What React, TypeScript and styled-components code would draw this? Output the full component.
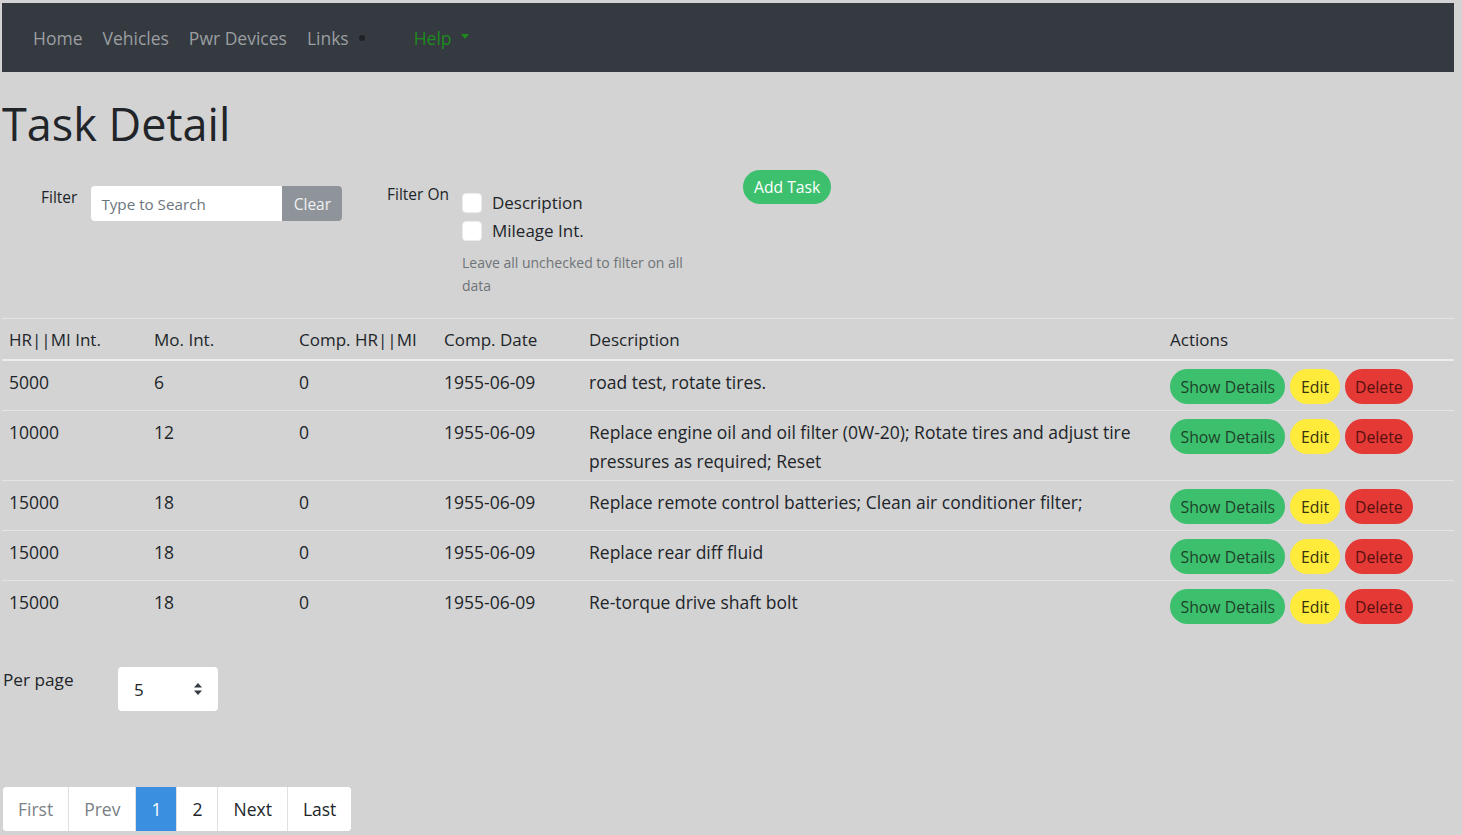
import React from "react";
import styled, { createGlobalStyle } from "styled-components";

const GlobalStyle = createGlobalStyle`
  html, body {
    margin: 0;
    padding: 0;
    background: #d3d3d3;
  }
  body {
    font-family: "Open Sans", "Noto Sans", sans-serif;
    color: #212529;
  }
  * { box-sizing: border-box; }
`;

interface TaskRow {
  interval: number;
  months: number;
  compHr: number;
  compDate: string;
  description: string;
}

const tasks: TaskRow[] = [
  { interval: 5000, months: 6, compHr: 0, compDate: "1955-06-09", description: "road test, rotate tires." },
  {
    interval: 10000,
    months: 12,
    compHr: 0,
    compDate: "1955-06-09",
    description:
      "Replace engine oil and oil filter (0W-20); Rotate tires and adjust tire pressures as required; Reset",
  },
  {
    interval: 15000,
    months: 18,
    compHr: 0,
    compDate: "1955-06-09",
    description: "Replace remote control batteries; Clean air conditioner filter;",
  },
  { interval: 15000, months: 18, compHr: 0, compDate: "1955-06-09", description: "Replace rear diff fluid" },
  { interval: 15000, months: 18, compHr: 0, compDate: "1955-06-09", description: "Re-torque drive shaft bolt" },
];

const pages = [
  { label: "First", state: "disabled" },
  { label: "Prev", state: "disabled" },
  { label: "1", state: "active" },
  { label: "2", state: "normal" },
  { label: "Next", state: "normal" },
  { label: "Last", state: "normal" },
] as const;

export default function App() {
  return (
    <>
      <GlobalStyle />
      <Page>
        <NavBar>
          <NavLink>Home</NavLink>
          <NavLink>Vehicles</NavLink>
          <NavLink>Pwr Devices</NavLink>
          <NavLink>
            Links <Dot />
          </NavLink>
          <HelpLink>
            Help <Caret />
          </HelpLink>
        </NavBar>

        <Title>Task Detail</Title>

        <FilterArea>
          <FilterGroup>
            <FieldLabel>Filter</FieldLabel>
            <InputGroup>
              <SearchInput placeholder="Type to Search" />
              <ClearButton>Clear</ClearButton>
            </InputGroup>
          </FilterGroup>

          <FilterOnGroup>
            <FieldLabel>Filter On</FieldLabel>
            <CheckList>
              <CheckRow>
                <CheckBox />
                Description
              </CheckRow>
              <CheckRow>
                <CheckBox />
                Mileage Int.
              </CheckRow>
              <HelpText>Leave all unchecked to filter on all data</HelpText>
            </CheckList>
          </FilterOnGroup>

          <AddButton>Add Task</AddButton>
        </FilterArea>

        <Table>
          <colgroup>
            <col style={{ width: 145 }} />
            <col style={{ width: 145 }} />
            <col style={{ width: 145 }} />
            <col style={{ width: 145 }} />
            <col style={{ width: 581 }} />
            <col />
          </colgroup>
          <thead>
            <tr>
              <Th>HR||MI Int.</Th>
              <Th>Mo. Int.</Th>
              <Th>Comp. HR||MI</Th>
              <Th>Comp. Date</Th>
              <Th>Description</Th>
              <Th>Actions</Th>
            </tr>
          </thead>
          <tbody>
            {tasks.map((t, i) => (
              <tr key={i}>
                <Td>{t.interval}</Td>
                <Td>{t.months}</Td>
                <Td>{t.compHr}</Td>
                <Td>{t.compDate}</Td>
                <Td>{t.description}</Td>
                <Td>
                  <Actions>
                    <PillButton $variant="green">Show Details</PillButton>
                    <PillButton $variant="yellow">Edit</PillButton>
                    <PillButton $variant="red">Delete</PillButton>
                  </Actions>
                </Td>
              </tr>
            ))}
          </tbody>
        </Table>

        <PerPageRow>
          <PerPageLabel>Per page</PerPageLabel>
          <SelectBox>
            5
            <svg width="10" height="14" viewBox="0 0 10 14">
              <path d="M5 1 L9 5.5 H1 Z" fill="#343a40" />
              <path d="M5 13 L9 8.5 H1 Z" fill="#343a40" />
            </svg>
          </SelectBox>
        </PerPageRow>

        <Pagination>
          {pages.map((p) => (
            <PageItem key={p.label} $state={p.state}>
              {p.label}
            </PageItem>
          ))}
        </Pagination>
      </Page>
    </>
  );
}

/* Styled Components */
const Page = styled.div`
  padding: 3px 8px 4px 2px;
`;

const NavBar = styled.nav`
  height: 69px;
  background: #343a40;
  display: flex;
  align-items: center;
  padding-left: 21px;
`;

const NavLink = styled.a`
  display: flex;
  align-items: center;
  padding: 0 10px;
  font-size: 17.5px;
  color: #9b9ea2;
  cursor: pointer;
`;

const Dot = styled.span`
  display: inline-block;
  width: 6px;
  height: 6px;
  border-radius: 50%;
  background: #1f2326;
  margin-left: 10px;
`;

const HelpLink = styled(NavLink)`
  color: #1d8a1d;
  margin-left: 29px;
`;

const Caret = styled.span`
  display: inline-block;
  margin-left: 9px;
  margin-top: -2px;
  border-top: 5px solid #1d8a1d;
  border-left: 4.5px solid transparent;
  border-right: 4.5px solid transparent;
`;

const Title = styled.h1`
  font-size: 45px;
  font-weight: 400;
  margin: 26px 0 20px;
  line-height: 52px;
`;

const FilterArea = styled.div`
  display: flex;
  align-items: flex-start;
  height: 148px;
`;

const FilterGroup = styled.div`
  display: flex;
  align-items: flex-start;
  padding-left: 39px;
  padding-top: 16px;
  gap: 14px;
  width: 385px;
`;

const FieldLabel = styled.div`
  font-size: 15.5px;
  line-height: 22px;
`;

const InputGroup = styled.div`
  display: flex;
`;

const SearchInput = styled.input`
  width: 191px;
  height: 35px;
  border: none;
  border-radius: 4px 0 0 4px;
  background: #fff;
  padding: 0 10px;
  font-family: inherit;
  font-size: 15.2px;
  color: #212529;
  outline: none;

  &::placeholder {
    color: #6c757d;
  }
`;

const ClearButton = styled.button`
  width: 60px;
  height: 35px;
  border: none;
  border-radius: 0 4px 4px 0;
  background: #8e9499;
  color: #eef0f2;
  font-family: inherit;
  font-size: 15.5px;
`;

const FilterOnGroup = styled.div`
  display: flex;
  align-items: flex-start;
  padding-top: 13px;
  gap: 13px;
  width: 356px;
`;

const CheckList = styled.div`
  display: flex;
  flex-direction: column;
  padding-top: 6px;
  width: 232px;
`;

const CheckRow = styled.label`
  display: flex;
  align-items: center;
  gap: 10px;
  font-size: 17px;
  line-height: 28px;
`;

const CheckBox = styled.span`
  width: 20px;
  height: 20px;
  border-radius: 4px;
  background: #fff;
  border: 1px solid #ececec;
`;

const HelpText = styled.div`
  font-size: 14px;
  line-height: 23px;
  color: #6f7378;
  margin-top: 6px;
`;

const AddButton = styled.button`
  height: 34px;
  padding: 0 11px;
  border: none;
  border-radius: 17px;
  background: #3dc06e;
  color: #fff;
  font-family: inherit;
  font-size: 15.7px;
`;

const Table = styled.table`
  width: 1452px;
  border-collapse: collapse;
  table-layout: fixed;
  border-top: 1px solid #e4e4e4;
`;

const Th = styled.th`
  text-align: left;
  font-weight: 500;
  font-size: 17px;
  line-height: 28px;
  padding: 7px 7px 5px;
  border-bottom: 2px solid #ececec;
`;

const Td = styled.td`
  font-size: 17.5px;
  line-height: 29px;
  padding: 7px 7px 4px;
  vertical-align: top;
  border-bottom: 1px solid #e4e4e4;

  tr:last-child & {
    border-bottom: none;
  }
`;

const Actions = styled.div`
  display: flex;
  gap: 5px;
  padding: 1px 0 2px;
`;

const variants = {
  green: { bg: "#3dc06e", fg: "#1d4029" },
  yellow: { bg: "#ffeb3b", fg: "#353010" },
  red: { bg: "#e53935", fg: "#561010" },
};

const PillButton = styled.button<{ $variant: keyof typeof variants }>`
  height: 35px;
  padding: 0 10.5px;
  border: none;
  border-radius: 18px;
  background: ${({ $variant }) => variants[$variant].bg};
  color: ${({ $variant }) => variants[$variant].fg};
  font-family: inherit;
  font-size: 15.8px;
  white-space: nowrap;
`;

const PerPageRow = styled.div`
  display: flex;
  align-items: flex-start;
  margin-top: 37px;
  padding-left: 1px;
`;

const PerPageLabel = styled.div`
  font-size: 17.2px;
  line-height: 26px;
  width: 115px;
`;

const SelectBox = styled.div`
  width: 100px;
  height: 44px;
  background: #fff;
  border-radius: 4px;
  display: flex;
  align-items: center;
  justify-content: space-between;
  padding: 0 15px 0 16px;
  font-size: 17px;
`;

const Pagination = styled.div`
  display: inline-flex;
  margin-top: 76px;
  margin-left: 1px;
  background: #fff;
  border-radius: 4px;
  overflow: hidden;
`;

const PageItem = styled.div<{ $state: "disabled" | "active" | "normal" }>`
  height: 44px;
  padding: 0 15px;
  display: flex;
  align-items: center;
  font-size: 17.5px;
  border-left: 1px solid #dee2e6;
  background: ${({ $state }) => ($state === "active" ? "#3a8fe0" : "#fff")};
  color: ${({ $state }) =>
    $state === "active" ? "#fff" : $state === "disabled" ? "#7a7f84" : "#212529"};

  &:first-child {
    border-left: none;
  }
`;
